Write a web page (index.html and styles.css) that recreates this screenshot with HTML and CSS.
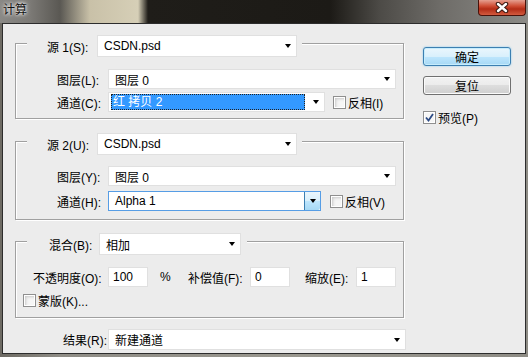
FILE: index.html
```html
<!DOCTYPE html>
<html lang="zh-CN">
<head>
  <meta charset="UTF-8" />
  <title>计算</title>
  <link rel="stylesheet" href="styles.css">
</head>
<body>

  <div class="titlebar">
    <span class="title">计算</span>
    <div class="close">
      <svg width="14" height="11" viewBox="0 0 14 11">
        <path d="M3 2 L11 9 M11 2 L3 9" stroke="#3a1a14" stroke-width="4.5" stroke-linecap="round" fill="none"/>
        <path d="M3 2 L11 9 M11 2 L3 9" stroke="#fff" stroke-width="2.4" stroke-linecap="round" fill="none"/>
      </svg>
    </div>
  </div>

  <div class="client">
    <div class="main">

      <div class="group group-1">
        <div class="group-head">
          <span class="lbl">源 1(S):</span>
          <div class="select sel-src"><span class="val">CSDN.psd</span><i class="arrow"></i></div>
        </div>
        <div class="row">
          <span class="lbl">图层(L):</span>
          <div class="select sel-layer"><span class="val">图层 0</span><i class="arrow"></i></div>
        </div>
        <div class="row">
          <span class="lbl">通道(C):</span>
          <div class="select sel-chan"><span class="val hl">红 拷贝 2</span><i class="arrow"></i></div>
          <label class="cb"><span class="check"></span>反相(I)</label>
        </div>
      </div>

      <div class="group group-2">
        <div class="group-head">
          <span class="lbl">源 2(U):</span>
          <div class="select sel-src"><span class="val">CSDN.psd</span><i class="arrow"></i></div>
        </div>
        <div class="row">
          <span class="lbl">图层(Y):</span>
          <div class="select sel-layer"><span class="val">图层 0</span><i class="arrow"></i></div>
        </div>
        <div class="row">
          <span class="lbl">通道(H):</span>
          <div class="select sel-chan2 focus"><span class="val">Alpha 1</span><span class="drop"><i class="arrow"></i></span></div>
          <label class="cb"><span class="check"></span>反相(V)</label>
        </div>
      </div>

      <div class="group group-3">
        <div class="group-head head-blend">
          <span class="lbl">混合(B):</span>
          <div class="select sel-blend"><span class="val">相加</span><i class="arrow"></i></div>
        </div>
        <div class="row row-nums">
          <span class="lbl lbl-opacity">不透明度(O):</span>
          <div class="input">100</div>
          <span class="pct">%</span>
          <span class="lbl lbl-offset">补偿值(F):</span>
          <div class="input">0</div>
          <span class="lbl lbl-scale">缩放(E):</span>
          <div class="input">1</div>
        </div>
        <div class="row row-mask">
          <label class="cb"><span class="check"></span>蒙版(K)...</label>
        </div>
      </div>

      <div class="row row-result">
        <span class="lbl">结果(R):</span>
        <div class="select sel-result"><span class="val">新建通道</span><i class="arrow"></i></div>
      </div>

    </div>

    <div class="side">
      <div class="btn btn-default">确定</div>
      <div class="btn">复位</div>
      <label class="cb">
        <span class="check checked">
          <svg width="9" height="9" viewBox="0 0 9 9"><path d="M1 4.5 L3.5 7.5 L8 1" stroke="#2c4b85" stroke-width="1.8" fill="none"/></svg>
        </span>预览(P)
      </label>
    </div>
  </div>

</body>
</html>
```

FILE: styles.css
```css
* {
  box-sizing: border-box;
}

body {
  margin: 0;
  width: 528px;
  height: 357px;
  overflow: hidden;
  background: linear-gradient(to right, #6d6a63 0, #8f8d86 60px, #9a988f 300px, #8e8c85 528px);
  font-family: "Liberation Sans", "Noto Sans CJK SC", sans-serif;
  font-size: 12px;
  color: #000;
}

/* window title */
.titlebar {
  height: 23px;
  display: flex;
  align-items: flex-start;
  background: linear-gradient(to right, #8a8986 0, #7c7a76 30px, #5a5853 60px, #c9c1a8 90px, #d6cfb7 138px, #1f1d19 148px, #1c1a16 330px, #4d4b47 380px, #6e6c68 440px, #8c8b87 528px);
}

.title {
  padding: 3px 0 0 3px;
  line-height: 14px;
  color: #111;
  text-shadow: 0 0 3px #fff, 0 0 5px #fff;
}

.close {
  margin-left: auto;
  margin-right: 2px;
  width: 48px;
  height: 16px;
  border: 1px solid #4a120a;
  border-top: none;
  border-radius: 0 0 4px 4px;
  background: linear-gradient(#e59f90, #cf4d35 40%, #b32c16 60%, #d35b3f);
  display: flex;
  align-items: center;
  justify-content: center;
}

/* dialog body */
.client {
  margin: 0 2px;
  height: 331px;
  border: 1px solid #2c2c2c;
  background: #ececec;
  display: flex;
  align-items: flex-start;
  padding: 19px 0 0 12px;
}

.main {
  width: 390px;
}

.group {
  width: 389px;
  border: 1px solid #a0a0a0;
  box-shadow: inset 1px 1px 0 #fff, 1px 1px 0 #fff;
  padding-bottom: 6px;
}

.group-2 {
  margin-top: 22px;
  padding-bottom: 8px;
}

.group-3 {
  margin-top: 21px;
  padding-bottom: 10px;
}

.group-head {
  display: flex;
  align-items: center;
  height: 22px;
  width: 275px;
  margin: -9px 0 0 11px;
  padding-left: 20px;
  background: #ececec;
}

.head-blend {
  width: 220px;
  padding-left: 22px;
}

.group-head .lbl {
  width: 50px;
}

.row {
  display: flex;
  align-items: center;
  height: 20px;
  margin-top: 3px;
  padding-left: 41px;
}

.group-head + .row {
  margin-top: 12px;
}

.group-2 .group-head + .row {
  margin-top: 11px;
}

.group-2 .row {
  margin-top: 5px;
}

.lbl {
  width: 51px;
  flex: none;
  white-space: nowrap;
}

/* combo boxes */
.select {
  display: flex;
  align-items: center;
  height: 100%;
  flex: none;
  background: #fff;
  border: 1px solid #e0e0e0;
  padding-left: 6px;
}

.select .val {
  flex: 1;
  white-space: nowrap;
}

.arrow {
  flex: none;
  width: 0;
  height: 0;
  border-left: 3.5px solid transparent;
  border-right: 3.5px solid transparent;
  border-top: 4px solid #000;
  margin-right: 5px;
}

.sel-src { width: 200px; }
.sel-layer { width: 288px; }
.sel-chan { width: 217px; }
.sel-chan2 { width: 213px; }
.sel-blend { width: 142px; }
.sel-result { width: 298px; }

.select .hl {
  height: 16px;
  margin-left: -4px;
  margin-right: 8px;
  padding-left: 1px;
  line-height: 14px;
  background: #3399ff;
  color: #fff;
  border: 1px dotted #222;
}

.focus {
  border-color: #569de5;
  padding-right: 0;
}

.drop {
  width: 16px;
  height: 100%;
  display: flex;
  align-items: center;
  justify-content: center;
  border-left: 1px solid #3c7fb1;
  border-radius: 0 2px 2px 0;
  background: linear-gradient(#eaf6fd, #d9f0fc 50%, #bee6fd 50%, #a7d9f5);
}

.drop .arrow {
  margin: 0;
}

/* checkboxes */
.cb {
  display: flex;
  align-items: center;
  gap: 2px;
  margin-left: 8px;
  white-space: nowrap;
}

.group-2 .cb {
  margin-left: 9px;
}

.check {
  width: 13px;
  height: 13px;
  flex: none;
  border: 1px solid #8f8f8f;
  background: #f6f6f6;
  padding: 1px;
  display: flex;
  align-items: center;
  justify-content: center;
  box-shadow: inset 0 0 0 1px #fff, inset 2px 2px 3px #c8c8c8;
}

.checked {
  box-shadow: inset 0 0 0 1px #fff;
}

/* number fields */
.row-nums {
  margin-top: 7px;
  padding-left: 17px;
}

.lbl-opacity { width: 75px; }
.lbl-offset { width: 62px; margin-left: 16px; }
.lbl-scale { width: 51px; margin-left: 15px; }

.input {
  width: 40px;
  height: 100%;
  flex: none;
  display: flex;
  align-items: center;
  padding-left: 4px;
  background: #fff;
  border: 1px solid #e0e0e0;
}

.pct {
  width: 12px;
  margin-left: 12px;
}

.row-mask {
  height: 14px;
  margin-top: 6px;
  padding-left: 7px;
}

.row-mask .cb {
  margin-left: 0;
}

.row-result {
  height: 21px;
  margin-top: 11px;
  padding-left: 48px;
}

.row-result .lbl {
  width: 45px;
}

/* buttons */
.side {
  width: 88px;
  margin-left: 18px;
  margin-top: 4px;
}

.btn {
  height: 19px;
  display: flex;
  align-items: center;
  justify-content: center;
  border: 1px solid #707070;
  border-radius: 3px;
  background: linear-gradient(#f2f2f2, #ebebeb 50%, #dddddd 50%, #cfcfcf);
  box-shadow: inset 0 0 0 1px #fbfbfb;
}

.btn-default {
  border-color: #3c7fb1;
  background: linear-gradient(#eaf6fd, #d9f0fc 50%, #bee6fd 50%, #a7d9f5);
  box-shadow: inset 0 0 0 1px #c6ecfc, 0 0 2px #7cc4ee;
}

.btn + .btn {
  margin-top: 10px;
}

.side .cb {
  margin: 14px 0 0;
}
```
